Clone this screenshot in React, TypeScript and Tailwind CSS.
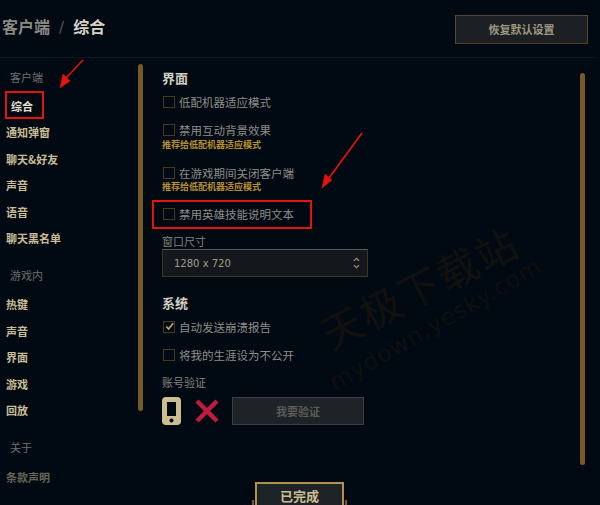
const FONT = '"Noto Sans CJK SC", "DejaVu Sans", sans-serif'

function Check({ label, checked, hint, className }: { label: string; checked?: boolean; hint?: boolean; className?: string }) {
  return (
    <div className={className}>
      <div className="flex items-center h-4">
        <span className="relative w-3 h-3 ml-px border border-[#463a20] shrink-0">
          {checked && (
            <svg viewBox="0 0 12 12" className="absolute left-0 top-[-1px] w-[11px] h-[11px]" fill="none" stroke="#c8aa6e" strokeWidth="1.7">
              <path d="M2.5 6 L5 8.8 L10 2.5" />
            </svg>
          )}
        </span>
        <span className="ml-1 text-[11.5px] leading-4 text-[#8f8d85] whitespace-nowrap">{label}</span>
      </div>
      {hint && <div className="text-[9px] leading-3 mt-[0.5px] font-bold text-[#b8902f] whitespace-nowrap">推荐给低配机器适应模式</div>}
    </div>
  )
}

function NavItem({ label, className }: { label: string; className?: string }) {
  return <div className={`h-[26.4px] leading-[26.4px] pl-[6px] text-[11px] font-bold text-[#c9bd95] whitespace-nowrap ${className ?? ''}`}>{label}</div>
}

function NavHead({ label, className }: { label: string; className?: string }) {
  return <div className={`pl-[10px] text-[11px] leading-4 text-[#6f6e68] ${className ?? ''}`}>{label}</div>
}

export default function App() {
  return (
    <div className="relative w-[600px] h-[505px] overflow-hidden bg-[#010a13]" style={{ fontFamily: FONT }}>
      {/* header */}
      <div className="flex items-center justify-between h-[58px] w-[597px] pl-[2px] pr-[9px] border-b border-[#0e171f]">
        <div className="flex items-center text-[16px] leading-6 mt-[-6px] whitespace-nowrap">
          <span className="font-bold text-[#8c8a80]">客户端</span>
          <span className="mx-[9px] text-[#77756c] text-[13px]">/</span>
          <span className="font-bold text-[#d8d3c2]">综合</span>
        </div>
        <div className="flex items-center justify-center w-[133px] h-[29px] mt-[1px] bg-[#1c2024] border border-[#544a33] border-b-[#4a3c1f] text-[11px] font-bold text-[#9f9a80]">恢复默认设置</div>
      </div>

      <div className="flex h-[447px]">
        {/* sidebar */}
        <div className="relative w-[162px] shrink-0 pt-[11px]">
          <NavHead label="客户端" />
          <div className="mt-2 h-[26.4px] leading-[26.4px] pl-[11px] text-[11px] font-bold text-[#e4e0d2]">综合</div>
          <NavItem label="通知弹窗" />
          <NavItem label="聊天&好友" />
          <NavItem label="声音" />
          <NavItem label="语音" />
          <NavItem label="聊天黑名单" />
          <NavHead label="游戏内" className="mt-4" />
          <NavItem label="热键" className="mt-2" />
          <NavItem label="声音" />
          <NavItem label="界面" />
          <NavItem label="游戏" />
          <NavItem label="回放" />
          <NavHead label="关于" className="mt-4" />
          <NavItem label="条款声明" className="mt-[9px] opacity-50" />
          <div className="absolute left-[138px] top-[6px] w-[5px] h-[347px] rounded-full bg-[#785a28]" />
        </div>

        {/* settings */}
        <div className="relative flex-1 pt-[12px]">
          <div className="text-[13px] leading-4 font-bold text-[#d2cfc2]">界面</div>
          <Check label="低配机器适应模式" className="mt-2" />
          <Check label="禁用互动背景效果" hint className="mt-3" />
          <Check label="在游戏期间关闭客户端" hint className="mt-[14px]" />
          <Check label="禁用英雄技能说明文本" className="mt-[13px]" />
          <div className="mt-[11px] text-[11px] leading-4 text-[#85837a]">窗口尺寸</div>
          <div className="flex items-center justify-between w-[206px] h-[28px] pl-[11px] pr-[7px] bg-[#14181c] border border-[#40351f] border-t-[#5b5a56] text-[10px] text-[#a09b8c]" style={{ fontFamily: '"DejaVu Sans", sans-serif' }}>
            <span>1280 x 720</span>
            <svg viewBox="0 0 8 14" className="w-[7px] h-3" fill="none" stroke="#a68c5b" strokeWidth="1.5">
              <path d="M1 4.5 L4 1.5 L7 4.5 M1 9.5 L4 12.5 L7 9.5" />
            </svg>
          </div>
          <div className="mt-[18px] text-[13px] leading-4 font-bold text-[#d2cfc2]">系统</div>
          <Check label="自动发送崩溃报告" checked className="mt-[8px]" />
          <Check label="将我的生涯设为不公开" className="mt-3" />
          <div className="mt-[11px] text-[11px] leading-4 text-[#85837a]">账号验证</div>
          <div className="mt-[7px] flex items-center">
            <svg viewBox="0 0 19 28" className="w-[19px] h-[28px]">
              <rect width="19" height="28" rx="4" fill="#cdbe91" />
              <rect x="5" y="5" width="9" height="14" fill="#010a13" />
              <circle cx="9.5" cy="23.5" r="2" fill="#010a13" />
            </svg>
            <svg viewBox="0 0 24 24" className="ml-[14px] w-6 h-6" stroke="#c21b3f" strokeWidth="4.5">
              <path d="M2 2 L22 22 M22 2 L2 22" />
            </svg>
            <div className="ml-[13px] flex items-center justify-center w-[132px] h-[28px] bg-[#1e2328] border border-[#3c3f42] text-[11px] font-bold text-[#5a5a56]">我要验证</div>
          </div>
          <div className="absolute left-[418px] top-[15px] w-[5px] h-[392px] rounded-full bg-[#785a28]" />
        </div>
      </div>

      {/* done button */}
      <div className="absolute left-[255px] top-[482px] w-[89px] h-[30px] pb-[3px] flex items-center justify-center bg-[#1e2328] border-2 border-[#b0914f] text-[13px] font-bold text-[#cdbe91]">已完成</div>
      <div className="absolute left-[252px] top-[500px] w-[2px] h-[5px] bg-[#785a28]" />
      <div className="absolute left-[345px] top-[500px] w-[2px] h-[5px] bg-[#785a28]" />

      {/* watermark */}
      <div className="absolute left-[311px] top-[262px] -rotate-[27deg] text-[41px] leading-[48px] tracking-[2px] text-[#12110e] whitespace-nowrap pointer-events-none">天极下载站</div>
      <div className="absolute left-[315px] top-[308px] -rotate-[30deg] text-[23px] leading-8 tracking-[1px] text-[#100f0e] whitespace-nowrap pointer-events-none" style={{ fontFamily: '"DejaVu Sans", sans-serif' }}>mydown.yesky.com</div>

      {/* annotations */}
      <div className="absolute left-[5px] top-[91px] w-[39px] h-[28px] border-2 border-[#e5140f]" />
      <div className="absolute left-[152px] top-[200px] w-[160px] h-[29px] border-2 border-[#e5140f]" />
      <svg className="absolute inset-0 w-[600px] h-[505px] pointer-events-none" viewBox="0 0 600 505" fill="#e5140f" stroke="#e5140f">
        <path d="M83 60 L66 78" strokeWidth="1.6" />
        <path d="M60 88 L63 74 L70 81 Z" strokeWidth="0.5" />
        <path d="M362 133 L329 178" strokeWidth="1.6" />
        <path d="M322 188 L325 174 L332 180 Z" strokeWidth="0.5" />
      </svg>
    </div>
  )
}
